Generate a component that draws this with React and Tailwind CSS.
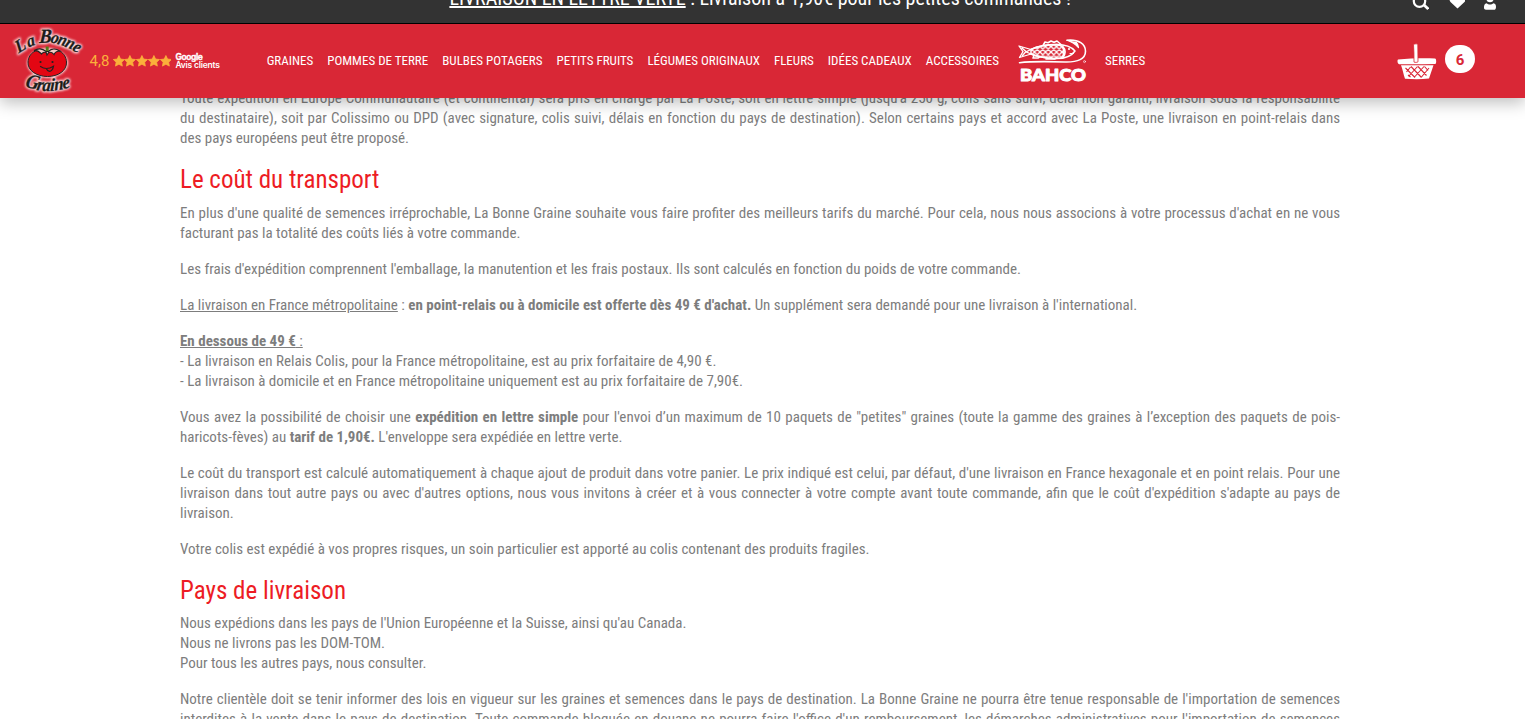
import React from "react";

const STAR = "M6 .4 7.7 4 11.7 4.5 8.8 7.2 9.5 11.2 6 9.3 2.5 11.2 3.2 7.2 .3 4.5 4.3 4Z";

const leftLinks = [
  "GRAINES",
  "POMMES DE TERRE",
  "BULBES POTAGERS",
  "PETITS FRUITS",
  "LÉGUMES ORIGINAUX",
  "FLEURS",
  "IDÉES CADEAUX",
  "ACCESSOIRES",
];

const logoLetters = [
  ["L", 6.5, 28.5, -32, 18],
  ["a", 16.5, 22.5, -22, 17],
  ["B", 27, 18, -2, 20],
  ["o", 38, 17.5, 8, 17],
  ["n", 44.5, 19, 14, 17],
  ["n", 52, 21.5, 20, 17],
  ["e", 59.5, 25, 26, 17],
  ["G", 12.5, 62, 10, 20],
  ["r", 24, 65, 6, 18],
  ["a", 30, 66, 0, 18],
  ["i", 38, 66, -4, 18],
  ["n", 42.5, 65.5, -8, 18],
  ["e", 51, 64, -12, 18],
];

function LogoText({ className }) {
  return (
    <g className={className}>
      {logoLetters.map(([ch, x, y, angle, size], i) => (
        <text key={i} transform={`translate(${x} ${y}) rotate(${angle}) skewX(-6) scale(0.93 1)`} fontSize={size}>
          {ch}
        </text>
      ))}
    </g>
  );
}

function Logo() {
  return (
    <svg width="72" height="72" viewBox="0 0 72 72" className="font-['Liberation_Serif',serif] font-bold italic">
      <defs>
        <filter id="glow" x="-20%" y="-20%" width="140%" height="140%">
          <feGaussianBlur stdDeviation="0.9" />
        </filter>
      </defs>
      <g filter="url(#glow)" opacity=".85">
        <LogoText className="fill-white stroke-white stroke-[2.600]" />
        <ellipse cx="35.500" cy="38" rx="20.500" ry="15" fill="#fff" />
      </g>
      <path d="M35 27C25 22 16.500 28 16 37c-.5 8.500 8.500 14.500 19.500 14.500S55 45.500 54.500 37c-.5-9.500-9.500-15-19.500-10Z" fill="#e30613" stroke="#222" strokeWidth="1" />
      <path d="M34.500 26.500c-5-3-8-3.500-12.500-1 4-.4 5.500 1.500 7.500 3.500 1-1.500 2.500-2 4.500-2l1 3 2-3c2.500 0 4 1 5 2.500 1-2.500 3-3.500 6-3.500-5-3-8-2.500-12 .5Z" fill="#f0c8c4" stroke="#222" strokeWidth="1.200" />
      <path d="M35.200 21.500v4.500" stroke="#527a18" strokeWidth="3" />
      <circle cx="28.500" cy="37" r="1.100" fill="#222" />
      <circle cx="40.500" cy="37" r="1.100" fill="#222" />
      <path d="M28.500 41.500c3.500 2.500 8.500 2.500 13-.3-.5 3.500-2.500 5.500-4.500 5s-2-1.500-2.500-2.500" fill="none" stroke="#222" strokeWidth="1.200" strokeLinecap="round" />
      <LogoText className="fill-[#1d1d1b] stroke-[#1d1d1b] stroke-[0.300]" />
    </svg>
  );
}

function Bahco() {
  return (
    <svg width="70" height="44" viewBox="0 0 70 44" fill="none" stroke="#fff" strokeWidth="1.500" strokeLinejoin="round" strokeLinecap="round">
      <defs>
        <pattern id="scales" width="5.500" height="5.500" patternUnits="userSpaceOnUse" patternTransform="translate(1 2)">
          <path d="M0 0 5.500 5.500M5.500 0 0 5.500" stroke="#fff" strokeWidth="1.300" />
        </pattern>
      </defs>
      <path d="M14 10.500c8-4 16-5 26-5 10 0 15 3 18 6.500-4 6-11 8-21 7.500-9-.4-16-1.500-23-4.500" />
      <path d="M14 10.500 2 7l4 5.700L2.500 18.500 14 15M5 9l4 3.500L5.500 16.500M14 10.500l-5 2.300 5 2.200" strokeWidth="1.300" />
      <path d="M14 10.500c8-4 16-5 26-5l4.500 1.500c3.500 4 3 8 0 12L37 19.500c-9-.4-16-1.500-23-4.500Z" fill="url(#scales)" />
      <path d="M26 6.500 28 3l3 .8L34 2l3 1.200L40 2l4 3.500M17 16.500 16 19h5l2-1.500M29 20h9" strokeWidth="1.600" />
      <path d="M45.500 7c3.500 4 3 8 .5 11.500" strokeWidth="1.600" />
      <circle cx="52" cy="10" r="1.100" fill="#fff" stroke="none" />
      <path d="M53 14.500h3.500" strokeWidth="1" />
      <path d="M50 1.300C62 .2 68.500 5 68.500 12.300c0 7.700-7.500 11-20.500 10.700-15-.5-33-.8-45.500.7" strokeWidth="1.600" />
      <path d="M50 1.300c5 1.500 8 3.500 11.500 7.200-.2-2.300-1-4-2.500-5.500" fill="#fff" strokeWidth="1.200" />
      <circle cx="67.500" cy="22.600" r="1" strokeWidth=".6" />
      <text x="3" y="41.500" textLength="66" lengthAdjust="spacingAndGlyphs" fill="#fff" strokeWidth="1" className="font-['Lato',sans-serif] text-[17.500px] font-black">
        BAHCO
      </text>
    </svg>
  );
}

function Basket() {
  return (
    <svg width="40" height="37" viewBox="0 0 40 37">
      <path d="M1 16.500c12-1.200 26-1.500 37-1 1.500.2 1.600 5 .2 5.500-12 .3-25 .5-36 .2C.6 21 0 17.500 1 16.500Z" fill="#fff" />
      <path d="M4 22.200h32.500L32 35.500c-8 .9-16 .8-24 .2C6.500 31.500 5.500 26 4 22.200Z" fill="#fff" />
      <path d="M16.500 1.500c1.500-.8 3-.8 4.300-.2L21 18.800c-1.200.8-2.500.7-4 .3C17 13 17 7 16.500 1.500Z" fill="#fff" stroke="#d92736" strokeWidth=".8" />
      <path d="M8.500 25 18 34.500M14 23.500l10.500 11M21 23.500l8.500 9M27.500 23.500l3.500 4M13.500 24 9.500 29M20.500 23.500 11.500 33.500M27 23.500l-9.500 10.500M32 25l-7.500 9M11 32l2.500 2" fill="none" stroke="#d92736" strokeWidth="1.100" />
    </svg>
  );
}

export default function App() {
  return (
    <div className="flex h-[719px] flex-col overflow-hidden bg-white font-['Roboto_Condensed',Roboto,sans-serif] [font-stretch:75%]">
      <header className="z-10 shrink-0 shadow-[0_5px_15px_rgba(0,0,0,0.25)]">
        <div className="flex h-6 items-start overflow-hidden border-b border-black bg-[#333] pl-[449.400px] text-white">
          <p className="-mt-[14px] text-[20px] leading-6 whitespace-nowrap">
            <span className="underline">LIVRAISON EN LETTRE VERTE</span> : Livraison à 1,90€ pour les petites commandes !
          </p>
          <div className="-mt-[6px] ml-auto flex items-start justify-end gap-[18px] pr-[28px]">
            <svg width="18" height="16" viewBox="0 0 18 16" fill="none" stroke="#fff" strokeWidth="2.200">
              <circle cx="8.500" cy="7.200" r="5.700" />
              <path d="M12.500 10.500 17.300 15" strokeWidth="2.800" />
            </svg>
            <svg width="18" height="16" viewBox="0 0 18 16" fill="#fff">
              <path d="M10.500 14.500 3.500 8C0 3 6-1 10.500 3c4.500-4 10.500 0 7 5Z" />
            </svg>
            <svg width="14" height="17" viewBox="0 0 14 17" fill="#fff">
              <circle cx="7" cy="4.500" r="3.700" />
              <path d="M3.500 9.200C5.500 11 8.500 11 10.500 9.200 12.500 9.500 13 11 13 13c0 2-1 2.800-2 2.800H3c-1.500 0-2.200-1-2-2.800.1-2 .8-3.500 2.500-3.800Z" />
            </svg>
          </div>
        </div>
        <div className="flex h-[74px] items-center bg-[#d92736] text-white">
          <div className="flex w-[266.700px] shrink-0 items-center pl-3">
            <Logo />
            <span className="ml-[5.500px] w-[23px] text-[15px] leading-5 text-[#fbb03b] font-['Roboto'] [font-stretch:90%]">4,8</span>
            <span className="flex">
              {[0, 1, 2, 3, 4].map((i) => (
                <svg key={i} width="11.800" height="12" viewBox="0 0 12 12" fill="#fbb03b">
                  <path d={STAR} stroke="#fbb03b" strokeWidth=".8" />
                </svg>
              ))}
            </span>
            <span className="ml-[4px] flex flex-col text-[8.500px] leading-[8px] font-['Inter',sans-serif] font-semibold [font-stretch:100%]">
              <span className="tracking-[-0.400px] [-webkit-text-stroke:0.400px_white]">Google</span>
              <span className="tracking-[-0.230px] whitespace-nowrap">Avis clients</span>
            </span>
          </div>
          <nav className="flex flex-1 items-center gap-[14px] text-[13px] leading-5 whitespace-nowrap">
            {leftLinks.map((label) => (
              <a key={label}>{label}</a>
            ))}
            <span className="mr-1 ml-1">
              <Bahco />
            </span>
            <a>SERRES</a>
          </nav>
          <div className="flex items-center gap-2 pr-[50px]">
            <Basket />
            <span className="mb-[5px] flex h-7 w-[30px] items-center justify-center rounded-full bg-white pt-[3px] text-[15px] font-bold text-[#d92736] font-['Roboto'] [font-stretch:88%]">
              6
            </span>
          </div>
        </div>
      </header>
      <main className="-mt-[10px] ml-[180px] w-[1160px] text-justify text-[15px] leading-5 text-[#7d7d7d]">
        <p>
          Toute expédition en Europe Communautaire (et continental) sera pris en charge par La Poste, soit en lettre simple (jusqu'à 250 g, colis sans suivi, délai non garanti, livraison sous la responsabilité du destinataire), soit par Colissimo ou DPD (avec signature, colis suivi, délais en fonction du pays de destination). Selon certains pays et accord avec La Poste, une livraison en point-relais dans des pays européens peut être proposé.
        </p>
        <h2 className="h-[55px] pt-[17px] text-[25px] leading-[29px] text-[#ed1c24]">Le coût du transport</h2>
        <div className="flex flex-col gap-4">
          <p>
            En plus d'une qualité de semences irréprochable, La Bonne Graine souhaite vous faire profiter des meilleurs tarifs du marché. Pour cela, nous nous associons à votre processus d'achat en ne vous facturant pas la totalité des coûts liés à votre commande.
          </p>
          <p>
            Les frais d'expédition comprennent l'emballage, la manutention et les frais postaux. Ils sont calculés en fonction du poids de votre commande.
          </p>
          <p>
            <span className="underline">La livraison en France métropolitaine</span> : <b>en point-relais ou à domicile est offerte dès 49 € d'achat.</b> Un supplément sera demandé pour une livraison à l'international.
          </p>
          <p>
            <span className="underline"><b>En dessous de 49 €</b> :</span>
            <br />- La livraison en Relais Colis, pour la France métropolitaine, est au prix forfaitaire de 4,90 €.
            <br />- La livraison à domicile et en France métropolitaine uniquement est au prix forfaitaire de 7,90€.
          </p>
          <p>
            Vous avez la possibilité de choisir une <b>expédition en lettre simple</b> pour l'envoi d’un maximum de 10 paquets de "petites" graines (toute la gamme des graines à l’exception des paquets de pois-haricots-fèves) au <b>tarif de 1,90€.</b> L'enveloppe sera expédiée en lettre verte.
          </p>
          <p>
            Le coût du transport est calculé automatiquement à chaque ajout de produit dans votre panier. Le prix indiqué est celui, par défaut, d'une livraison en France hexagonale et en point relais. Pour une livraison dans tout autre pays ou avec d'autres options, nous vous invitons à créer et à vous connecter à votre compte avant toute commande, afin que le coût d'expédition s'adapte au pays de livraison.
          </p>
          <p>
            Votre colis est expédié à vos propres risques, un soin particulier est apporté au colis contenant des produits fragiles.
          </p>
        </div>
        <h2 className="h-[54px] pt-[17px] text-[25px] leading-[29px] text-[#ed1c24]">Pays de livraison</h2>
        <div className="flex flex-col gap-4">
          <p>
            Nous expédions dans les pays de l'Union Européenne et la Suisse, ainsi qu'au Canada.
            <br />Nous ne livrons pas les DOM-TOM.
            <br />Pour tous les autres pays, nous consulter.
          </p>
          <p className="[text-align-last:justify]">
            Notre clientèle doit se tenir informer des lois en vigueur sur les graines et semences dans le pays de destination. La Bonne Graine ne pourra être tenue responsable de l'importation de semences interdites à la vente dans le pays de destination. Toute commande bloquée en douane ne pourra faire l'office d'un remboursement, les démarches administratives pour l'importation de semences
          </p>
        </div>
      </main>
    </div>
  );
}
